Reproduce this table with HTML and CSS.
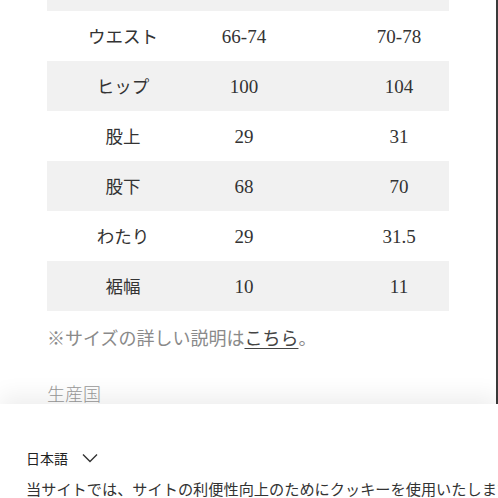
FILE: index.html
```html
<!DOCTYPE html>
<html lang="ja">
<head>
<meta charset="utf-8">
<link rel="stylesheet" href="styles.css">
</head>
<body>
<div class="page">
  <div class="content">
    <div class="size-table">
      <div class="row gray"><div class="c1"></div><div class="c2 num"></div><div class="c3 num"></div></div>
      <div class="row"><div class="c1">ウエスト</div><div class="c2 num">66-74</div><div class="c3 num">70-78</div></div>
      <div class="row gray"><div class="c1">ヒップ</div><div class="c2 num">100</div><div class="c3 num">104</div></div>
      <div class="row"><div class="c1">股上</div><div class="c2 num">29</div><div class="c3 num">31</div></div>
      <div class="row gray"><div class="c1">股下</div><div class="c2 num">68</div><div class="c3 num">70</div></div>
      <div class="row"><div class="c1">わたり</div><div class="c2 num">29</div><div class="c3 num">31.5</div></div>
      <div class="row gray"><div class="c1">裾幅</div><div class="c2 num">10</div><div class="c3 num">11</div></div>
    </div>
    <p class="note">※サイズの詳しい説明は<a class="link" href="#">こちら</a>。</p>
    <h3 class="section">生産国</h3>
  </div>
  <div class="banner">
    <div class="lang">日本語<svg class="chev" width="16" height="10" viewBox="0 0 16 10"><path d="M1 1.5 L8 8.5 L15 1.5" fill="none" stroke="#333" stroke-width="1.4"/></svg></div>
    <p class="cookie">当サイトでは、サイトの利便性向上のためにクッキーを使用いたします。</p>
  </div>
</div>
</body>
</html>
```

FILE: styles.css
```css
html, body {
  margin: 0;
  padding: 0;
  background: #fff;
  overflow: hidden;
}
body {
  width: 498px;
  height: 498px;
  font-family: "Noto Sans CJK JP", sans-serif;
  color: #333;
}
.page {
  position: relative;
  width: 498px;
  height: 498px;
  overflow: hidden;
}
.content {
  width: 498px;
  height: 498px;
  border-right: 2px solid #3a3a3a;
  padding: 0 0 0 47px;
  box-sizing: border-box;
}
.size-table {
  width: 402px;
  margin-top: -39px;
}
.row {
  display: grid;
  grid-template-columns: 152px 90px 1fr;
  height: 50px;
  align-items: center;
  font-size: 17.5px;
  color: #333;
}
.row.gray {
  background: #f1f1f1;
}
.c1, .c2, .c3 {
  text-align: center;
  line-height: 1;
}
.c3 {
  padding-left: 60px;
}
.num {
  font-family: "Liberation Serif", serif;
  font-size: 19px;
}
.note {
  margin: 14px 0 0 0;
  font-size: 18px;
  line-height: 24px;
  color: #8a8a8a;
}
.link {
  color: #444;
  text-decoration: underline;
  text-underline-offset: 3px;
}
.section {
  margin: 32px 0 0 0;
  font-size: 18px;
  font-weight: 300;
  color: #9a9a9a;
  line-height: 24px;
  font-family: "Noto Sans CJK JP", serif;
}
.banner {
  position: absolute;
  left: 0;
  top: 404px;
  width: 498px;
  height: 94px;
  background: #fff;
  box-shadow: 0 -8px 22px rgba(0, 0, 0, 0.07);
  padding: 44px 0 0 26px;
  box-sizing: border-box;
}
.lang {
  display: flex;
  align-items: center;
  gap: 14px;
  font-size: 14px;
  line-height: 20px;
  color: #222;
}
.chev {
  display: block;
}
.cookie {
  margin: 9px 0 0 0;
  font-size: 15.2px;
  line-height: 22px;
  color: #333;
  white-space: nowrap;
}
```
